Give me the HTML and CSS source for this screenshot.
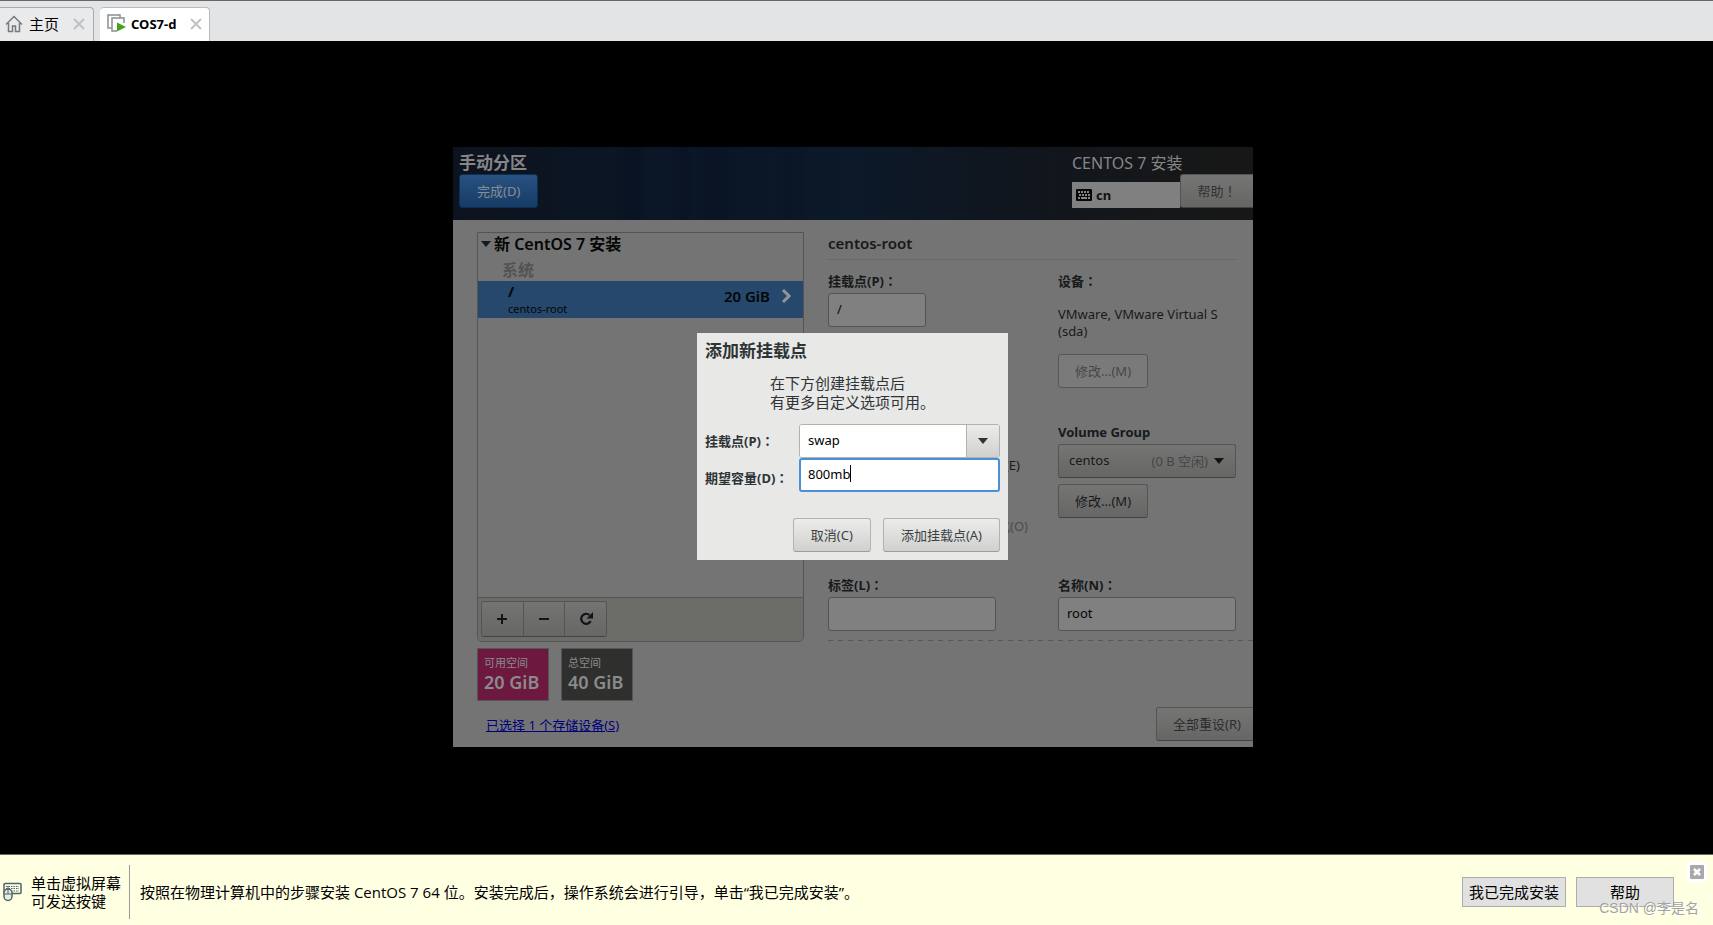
FILE: index.html
```html
<!DOCTYPE html>
<html lang="zh-CN">
<head>
<meta charset="utf-8">
<title>COS7-d</title>
<link rel="stylesheet" href="styles.css">
</head>
<body>
<nav class="tabs">
  <div class="tab">
    <svg class="tab-icon" width="18" height="18" viewBox="0 0 18 18" fill="none" stroke="#77797b" stroke-width="1.5"><path d="M1 9.5 9 1.5l8 8M3.5 8v8.500h4V11h3v5.500h4V8"/></svg>
    <span class="tab-name">主页</span>
    <button class="tab-close" aria-label="关闭主页"><svg width="12" height="12" viewBox="0 0 12 12" stroke="#bfc1c4" stroke-width="2"><path d="M1 1l10 10M11 1 1 11"/></svg></button>
  </div>
  <div class="tab active">
    <svg class="tab-icon" width="19" height="19" viewBox="0 0 19 19"><path d="M4.500 14H1V1h12v3" fill="none" stroke="#8b8d90" stroke-width="1.500"/><path d="M10 17H5V4h12v5" fill="none" stroke="#8b8d90" stroke-width="1.500"/><path d="M10 8.500v9l9-4.500z" fill="#47a01c"/></svg>
    <span class="tab-name">COS7-d</span>
    <button class="tab-close" aria-label="关闭 COS7-d"><svg width="12" height="12" viewBox="0 0 12 12" stroke="#bfc1c4" stroke-width="2"><path d="M1 1l10 10M11 1 1 11"/></svg></button>
  </div>
</nav>

<main class="stage">
  <section class="guest">
    <header class="guest-head">
      <div class="head-left">
        <h1 class="head-title">手动分区</h1>
        <button class="btn primary">完成(D)</button>
      </div>
      <div class="head-right">
        <div class="product">CENTOS 7 安装</div>
        <div class="head-tools">
          <div class="layout">
            <svg width="16" height="12" viewBox="0 0 16 12"><rect width="16" height="12" rx="1" fill="#050505"/><path d="M2 3h12M3 6h11" stroke="#858585" stroke-width="2" stroke-dasharray="2 1"/><path d="M2 9h2M5 9h6M12 9h2" stroke="#858585" stroke-width="2"/></svg>
            <span>cn</span>
          </div>
          <button class="btn help">帮助<span class="mid" lang="zh-TW">！</span></button>
        </div>
      </div>
    </header>

    <div class="guest-body">
      <div class="left">
        <div class="tree">
          <div class="tree-root"><svg width="10" height="6" viewBox="0 0 10 6"><path d="M0 0h10L5 6z" fill="#171a1b"/></svg>新 CentOS 7 安装</div>
          <div class="tree-group">系统</div>
          <div class="tree-item">
            <div class="item-name"><b>/</b><small>centos-root</small></div>
            <span class="item-size">20 GiB</span>
            <svg width="11" height="16" viewBox="0 0 11 16" fill="none" stroke="#929496" stroke-width="3"><path d="M2 2l6 6-6 6"/></svg>
          </div>
          <div class="tree-tools">
            <div class="tool-group">
              <button class="tool" aria-label="添加"><svg width="12" height="12" viewBox="0 0 12 12" stroke="#111516" stroke-width="2"><path d="M6 1v10M1 6h10"/></svg></button>
              <button class="tool" aria-label="删除"><svg width="12" height="12" viewBox="0 0 12 12" stroke="#111516" stroke-width="2"><path d="M1 6h10"/></svg></button>
              <button class="tool" aria-label="刷新"><svg width="14" height="14" viewBox="0 0 14 14"><path d="M10.500 3A5 5 0 1 0 11.700 9" fill="none" stroke="#111516" stroke-width="2.200"/><path d="M14 0v6.500H7.500z" fill="#111516"/></svg></button>
            </div>
          </div>
        </div>
        <div class="spaces">
          <div class="space free"><span>可用空间</span><strong>20 GiB</strong></div>
          <div class="space"><span>总空间</span><strong>40 GiB</strong></div>
        </div>
        <a class="storage" href="#">已选择 1 个存储设备(S)</a>
      </div>

      <div class="right">
        <h2 class="detail-title">centos-root</h2>
        <div class="cols">
          <div class="col">
            <label class="label" for="mount">挂载点(P)<span class="mid" lang="zh-TW">：</span></label>
            <input class="entry short" id="mount" value="/">
            <label class="check encrypt"><input type="checkbox">加密(E)</label>
            <label class="check format"><input type="checkbox" disabled>重新格式化(O)</label>
          </div>
          <div class="col">
            <div class="label">设备<span class="mid" lang="zh-TW">：</span></div>
            <p class="device">VMware, VMware Virtual S (sda)</p>
            <button class="btn disabled" disabled>修改...(M)</button>
            <label class="label group-label" for="vg">Volume Group</label>
            <div class="vg">
              <select class="vg-select" id="vg"><option>centos</option></select>
              <span class="vg-info">(0 B 空闲) <svg width="10" height="6" viewBox="0 0 10 6"><path d="M0 0h10L5 6z" fill="#111516"/></svg></span>
            </div>
            <button class="btn group-edit">修改...(M)</button>
          </div>
        </div>
        <div class="cols names">
          <div class="col">
            <label class="label" for="lbl">标签(L)<span class="mid" lang="zh-TW">：</span></label>
            <input class="entry medium" id="lbl">
          </div>
          <div class="col">
            <label class="label" for="name">名称(N)<span class="mid" lang="zh-TW">：</span></label>
            <input class="entry" id="name" value="root">
          </div>
        </div>
        <div class="dashes"></div>
        <button class="btn reset">全部重设(R)</button>
      </div>
    </div>

    <div class="overlay">
      <form class="dialog" role="dialog" aria-labelledby="dlg-title">
        <h2 class="dlg-title" id="dlg-title">添加新挂载点</h2>
        <p class="dlg-text">在下方创建挂载点后<br>有更多自定义选项可用。</p>
        <div class="dlg-fields">
          <label class="dlg-label" for="new-mount">挂载点(P)<span class="mid" lang="zh-TW">：</span></label>
          <div class="combo">
            <input class="combo-input" id="new-mount" value="swap">
            <button class="combo-btn" type="button" aria-label="展开"><svg width="10" height="6" viewBox="0 0 10 6"><path d="M0 0h10L5 6z" fill="#2e3436"/></svg></button>
          </div>
          <label class="dlg-label size-label" for="size">期望容量(D)<span class="mid" lang="zh-TW">：</span></label>
          <div class="focus-box"><input class="size-input" id="size" value="800mb"><i class="caret"></i></div>
        </div>
        <div class="dlg-actions">
          <button class="btn light" type="button">取消(C)</button>
          <button class="btn light" type="button">添加挂载点(A)</button>
        </div>
      </form>
    </div>
  </section>
</main>

<footer class="hint">
  <svg width="20" height="20" viewBox="0 0 20 20" fill="none" stroke="#4c646c"><rect x="1" y="1.500" width="17" height="10" rx="1" stroke-width="1.500"/><path d="M3 4.500h13M3 6.500h13M8 9h8" stroke-dasharray="1.500 1"/><rect x="1" y="7" width="8" height="11.500" rx="4" fill="#e9eddc" stroke-width="1.500"/><path d="M5 4v8M1 12h8"/></svg>
  <div class="hint-keys">单击虚拟屏幕<br>可发送按键</div>
  <div class="hint-sep"></div>
  <p class="hint-text">按照在物理计算机中的步骤安装 CentOS 7 64 位。安装完成后，操作系统会进行引导，单击“我已完成安装”。</p>
  <button class="win-btn">我已完成安装</button>
  <button class="win-btn wide">帮助</button>
  <button class="hint-close" aria-label="关闭"><svg width="14" height="14" viewBox="0 0 14 14"><rect width="14" height="14" rx="1" fill="#a9a9ab"/><path d="M4 4l6 6M10 4l-6 6" stroke="#fff" stroke-width="2.500"/></svg></button>
  <span class="watermark">CSDN @李是名</span>
</footer>
</body>
</html>
```

FILE: styles.css
```css
* {
  box-sizing: border-box;
}

body {
  margin: 0;
  min-height: 100vh;
  display: flex;
  flex-direction: column;
  font-family: "Noto Sans", "Noto Sans CJK SC", sans-serif;
  font-size: 13px;
  color: #000;
  background: #000;
}

button,
input,
select {
  font: inherit;
  margin: 0;
}

h1,
h2,
p {
  margin: 0;
}

svg {
  flex: none;
  display: block;
}

/* Punctuation centred in its em box */
.mid {
  font-family: "Noto Sans CJK TC", sans-serif;
  line-height: 1;
}

/* Tab strip */
.tabs {
  display: flex;
  align-items: flex-end;
  gap: 6px;
  height: 41px;
  border-top: 1px solid #66676b;
  background: #e3e4e6;
}

.tab {
  display: flex;
  align-items: center;
  height: 34px;
  padding: 0 8px 2px 5px;
  border: 1px solid #a9abae;
  border-width: 1px 1px 0 0;
  border-radius: 0 4px 0 0;
  background: #e9eaeb;
}

.tab.active {
  padding: 0 7px 2px;
  border-color: #b9bbbd;
  border-radius: 4px 4px 0 0;
  background: #fff;
}

.tab-name {
  margin-left: 6px;
  font-family: "Noto Sans CJK SC", sans-serif;
  font-size: 15px;
  line-height: 20px;
}

.tab.active .tab-name {
  margin-left: 5px;
  font-family: "Noto Sans", sans-serif;
  font-size: 13px;
  font-weight: 700;
}

.tab-close {
  margin-left: 14px;
  padding: 0;
  border: 0;
  background: none;
}

/* Guest display */
.stage {
  flex: 1;
  display: flex;
  align-items: center;
  justify-content: center;
  padding: 0 7px 2px 0;
  background: #000;
}

.guest {
  position: relative;
  display: flex;
  flex-direction: column;
  width: 800px;
  max-width: 100%;
  overflow: hidden;
  color: #171a1b;
  background: #747474;
}

.guest-head {
  display: flex;
  justify-content: space-between;
  height: 73px;
  padding: 6px 0 0 6px;
  color: #858687;
  background:
    linear-gradient(90deg, transparent 20%, rgba(0, 8, 24, .25) 23%, transparent 24%, transparent 27%, rgba(0, 8, 24, .25) 29%, transparent 30%, rgba(0, 8, 24, .25) 33%, transparent 36%, transparent 40%, rgba(0, 8, 24, .15) 42%, transparent 45%),
    linear-gradient(90deg, #0d131e 0%, #0b1626 25%, #0c1929 50%, #10161f 68%, #151719 88%, #171716 100%);
}

.head-title {
  font-size: 17px;
  line-height: 20px;
  font-weight: 700;
}

.product {
  font-size: 16px;
  line-height: 20px;
}

.head-tools {
  display: flex;
  align-items: flex-end;
}

.layout {
  display: flex;
  align-items: center;
  gap: 4px;
  width: 108px;
  height: 26px;
  padding-left: 4px;
  font-weight: 700;
  color: #111;
  background: #808080;
}

.btn {
  display: block;
  height: 34px;
  padding: 0 16px;
  border: 1px solid #545452;
  border-bottom-color: #424240;
  border-radius: 3px;
  font-size: 13px;
  line-height: 20px;
  white-space: nowrap;
  color: #171a1b;
  background: linear-gradient(#757573, #666664);
}

.btn.primary {
  margin-top: 1px;
  padding: 0 17px;
  border-color: #0e2f54;
  color: #8a8d90;
  background: linear-gradient(#285282, #163b66);
}

.btn.help {
  margin-top: 1px;
  width: 73px;
  border-right: 0;
  border-radius: 3px 0 0 3px;
  color: #303436;
}

.btn.disabled {
  border-color: #575757;
  color: #454748;
  background: #7a7a7a;
}

.btn.light {
  padding: 0 17px;
  border-color: #b2b2ae;
  border-bottom-color: #9c9c98;
  color: #3a4043;
  background: linear-gradient(#ececeb, #d0d0cf);
}

.guest-body {
  display: grid;
  grid-template-columns: 327px 1fr;
  gap: 24px;
  padding: 12px 0 6px 24px;
}

/* Partition list */
.left {
  display: flex;
  flex-direction: column;
  align-items: stretch;
  padding-bottom: 6px;
}

.tree {
  display: flex;
  flex-direction: column;
  height: 410px;
  border: 1px solid #545452;
  border-radius: 0 0 5px 5px;
  overflow: hidden;
}

.tree-root {
  display: flex;
  align-items: center;
  gap: 3px;
  padding-left: 3px;
  font-size: 16px;
  line-height: 22px;
  font-weight: 600;
  color: #050606;
}

.tree-group {
  padding: 4px 0 0 24px;
  font-size: 16px;
  line-height: 22px;
  font-weight: 700;
  color: #535353;
}

.tree-item {
  display: flex;
  align-items: center;
  height: 37px;
  padding: 0 11px 0 30px;
  color: #050606;
  background: #25486c;
}

.item-name {
  flex: 1;
}

.item-name b {
  display: block;
  font-size: 15px;
  line-height: 20px;
}

.item-name small {
  display: block;
  font-size: 11px;
  line-height: 16px;
}

.item-size {
  margin: -7px 11px 0 0;
  font-size: 15px;
  font-weight: 600;
}

.tree-item svg {
  margin-top: -7px;
}

.tree-tools {
  margin-top: auto;
  padding: 3px;
  border-top: 1px solid #545452;
  height: 44px;
  background: #6c6c69;
}

.tool-group {
  display: flex;
  width: 126px;
  border: 1px solid #545452;
  border-bottom-color: #424240;
  border-radius: 3px;
  overflow: hidden;
}

.tool {
  flex: 1;
  display: grid;
  place-items: center;
  height: 34px;
  padding: 0;
  border: 0;
  border-right: 1px solid #545452;
  background: linear-gradient(#747473, #676765);
}

.tool:last-child {
  border-right: 0;
}

.spaces {
  display: flex;
  gap: 12px;
  margin-top: 6px;
}

.space {
  width: 72px;
  height: 53px;
  padding: 6px 0 0 6px;
  border: 1px solid #555;
  color: #8b8b8b;
  background: #2f302e;
}

.space.free {
  background: #6d193f;
}

.space span {
  display: block;
  font-size: 11px;
  line-height: 16px;
}

.space strong {
  display: block;
  font-size: 18px;
  line-height: 22px;
  font-weight: 600;
  white-space: nowrap;
}

.storage {
  align-self: flex-start;
  margin: 14px 0 0 9px;
  font-size: 13px;
  line-height: 20px;
  color: #00007d;
}

/* Details */
.right {
  display: flex;
  flex-direction: column;
}

.detail-title {
  margin-right: 17px;
  padding-bottom: 5px;
  border-bottom: 1px solid #686868;
  font-size: 15px;
  line-height: 22px;
  font-weight: 600;
}

.cols {
  display: grid;
  grid-template-columns: 200px 1fr;
  gap: 30px;
  margin-top: 11px;
  padding-right: 17px;
}

.cols.names {
  margin-top: 39px;
}

.col {
  display: flex;
  flex-direction: column;
  align-items: flex-start;
}

.label {
  margin-bottom: 2px;
  font-size: 13px;
  line-height: 20px;
  font-weight: 700;
}

.entry {
  width: 100%;
  height: 34px;
  padding: 0 8px 2px;
  border: 1px solid #545452;
  border-radius: 3px;
  color: #050606;
  background: #808080;
}

.entry.short {
  width: 98px;
}

.entry.medium {
  width: 168px;
}

.check {
  align-self: flex-end;
  display: flex;
  align-items: center;
  gap: 6px;
  line-height: 20px;
}

.check input {
  margin: 0;
}

.encrypt {
  margin: 128px 8px 0 0;
}

.format {
  margin-top: 41px;
  color: #494b4c;
}

.device {
  margin: 13px 0 14px;
  line-height: 17px;
}

.group-label {
  margin-top: 34px;
}

.vg {
  position: relative;
  width: 100%;
}

.vg-select {
  appearance: none;
  display: block;
  width: 100%;
  height: 34px;
  padding: 0 10px 2px;
  border: 1px solid #545452;
  border-bottom-color: #424240;
  border-radius: 3px;
  color: #171a1b;
  background: linear-gradient(#757573, #666664);
}

.vg-info {
  position: absolute;
  top: 0;
  right: 12px;
  height: 34px;
  display: flex;
  align-items: center;
  gap: 6px;
  color: #454748;
  pointer-events: none;
}

.group-edit {
  margin-top: 6px;
}

.dashes {
  height: 1px;
  margin-top: 9px;
  background: repeating-linear-gradient(90deg, #585858 0 5px, transparent 5px 10px);
}

.reset {
  align-self: flex-end;
  margin: auto -5px 0 0;
  color: #2a2e30;
}

/* Dialog */
.overlay {
  position: absolute;
  inset: 0;
  display: grid;
  place-items: center;
  padding: 0 1px 1px 0;
}

.dialog {
  width: 311px;
  padding: 8px;
  color: #2e3436;
  background: #e8e8e6;
}

.dlg-title {
  font-size: 17px;
  line-height: 20px;
  font-weight: 700;
}

.dlg-text {
  padding: 13px 0 0 65px;
  font-size: 15px;
  line-height: 19px;
}

.dlg-fields {
  display: grid;
  grid-template-columns: 94px 1fr;
  align-items: center;
  margin-top: 12px;
}

.dlg-label {
  font-size: 13px;
  line-height: 20px;
  font-weight: 700;
  white-space: nowrap;
}

.size-label {
  padding-top: 6px;
}

.combo {
  display: flex;
  height: 34px;
  border: 1px solid #b2b2ae;
  border-radius: 3px;
  overflow: hidden;
  background: #fff;
}

.combo-input {
  flex: 1;
  min-width: 0;
  padding: 0 8px 2px;
  border: 0;
}

.combo-btn {
  display: grid;
  place-items: center;
  width: 33px;
  padding: 0;
  border: 0;
  border-left: 1px solid #b2b2ae;
  background: linear-gradient(#ececeb, #d0d0cf);
}

.focus-box {
  display: flex;
  align-items: center;
  height: 34px;
  padding: 0 7px 2px;
  border: 2px solid #4a90d9;
  border-radius: 3px;
  background: #fff;
}

.size-input {
  field-sizing: content;
  padding: 0;
  border: 0;
  outline: 0;
  background: none;
}

.caret {
  width: 1px;
  height: 17px;
  background: #000;
}

.dlg-actions {
  display: flex;
  justify-content: flex-end;
  gap: 12px;
  margin-top: 26px;
}

/* Bottom hint bar */
.hint {
  position: relative;
  display: flex;
  align-items: center;
  height: 71px;
  padding: 4px 39px 0 3px;
  border-top: 1px solid #66676b;
  font-size: 15px;
  background: #ffffe1;
}

.hint-keys {
  margin-left: 8px;
  line-height: 18px;
  white-space: nowrap;
}

.hint-sep {
  width: 1px;
  height: 54px;
  margin: 0 10px 0 8px;
  background: #9a9aa0;
}

.hint-text {
  flex: 1;
  font-family: "Open Sans", "Noto Sans CJK SC", sans-serif;
  line-height: 20px;
}

.win-btn {
  height: 30px;
  min-width: 104px;
  margin-left: 10px;
  padding: 0 6px;
  border: 1px solid #adadad;
  line-height: 20px;
  white-space: nowrap;
  background: #e1e1e1;
}

.win-btn.wide {
  min-width: 98px;
}

.hint-close {
  position: absolute;
  top: 7px;
  right: 6px;
  padding: 3px;
  border: 0;
  background: #fff;
}

.watermark {
  position: absolute;
  right: 14px;
  bottom: 7px;
  font-family: "Liberation Sans", "Noto Sans CJK SC", sans-serif;
  font-size: 14px;
  line-height: 20px;
  color: #a3a3a0;
  text-shadow: 1px 1px 0 #fff;
}
```
